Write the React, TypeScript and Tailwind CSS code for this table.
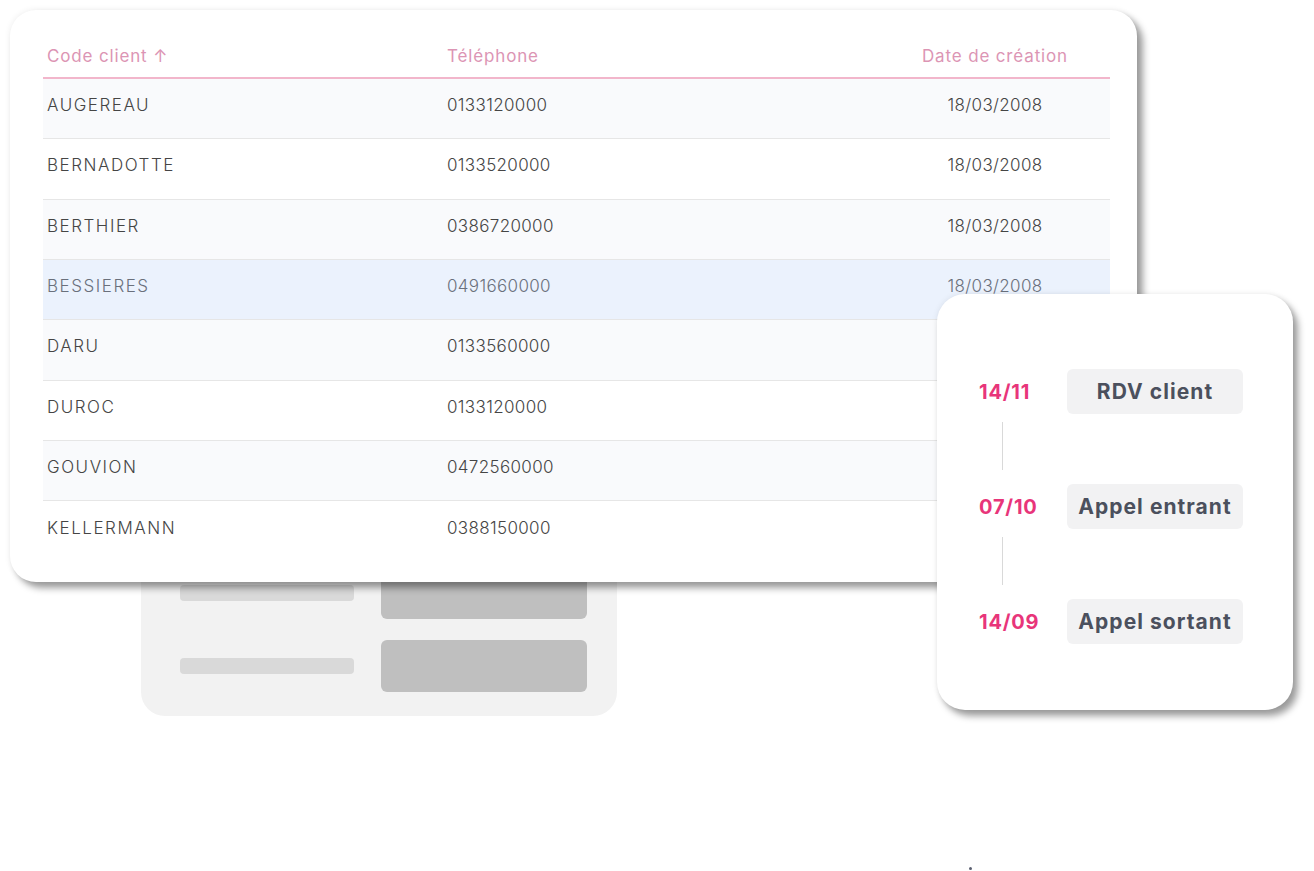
import React from "react";

const rows = [
  { code: "AUGEREAU", tel: "0133120000", date: "18/03/2008" },
  { code: "BERNADOTTE", tel: "0133520000", date: "18/03/2008" },
  { code: "BERTHIER", tel: "0386720000", date: "18/03/2008" },
  { code: "BESSIERES", tel: "0491660000", date: "18/03/2008" },
  { code: "DARU", tel: "0133560000", date: "18/03/2008" },
  { code: "DUROC", tel: "0133120000", date: "18/03/2008" },
  { code: "GOUVION", tel: "0472560000", date: "18/03/2008" },
  { code: "KELLERMANN", tel: "0388150000", date: "18/03/2008" },
];

const events = [
  { date: "14/11", label: "RDV client" },
  { date: "07/10", label: "Appel entrant" },
  { date: "14/09", label: "Appel sortant" },
];

export default function App() {
  return (
    <div
      className="relative w-[1314px] h-[871px] overflow-hidden bg-white"
      style={{ fontFamily: "Inter, 'Noto Sans', sans-serif" }}
    >
      {/* background grey card */}
      <div className="absolute left-[141px] top-[440px] w-[476px] h-[276px] rounded-[24px] bg-[#f2f2f2] flex flex-col justify-end gap-[21px] pb-[24px] pl-[39px]">
        {[0, 1].map((i) => (
          <div key={i} className="flex items-center gap-[27px]">
            <div className="w-[174px] h-[16px] rounded-[4px] bg-[#d9d9d9]" />
            <div className="w-[206px] h-[52px] rounded-[6px] bg-[#bfbfbf]" />
          </div>
        ))}
      </div>

      {/* main table card */}
      <div className="absolute left-[10px] top-[10px] w-[1127px] h-[572px] rounded-[26px] bg-white pl-[33px] pr-[27px] pt-[22px] shadow-[6px_6px_7px_rgba(0,0,0,0.38),0_0_6px_rgba(0,0,0,0.08)]">
        <div className="grid grid-cols-[400px_1fr_230px] h-[47px] pt-[4px] items-center border-b-2 border-[#f2b6cb] text-[17px] text-[#dc95b4] tracking-[0.05em]">
          <div className="pl-[4px]">Code client ↑</div>
          <div className="pl-[4px]">Téléphone</div>
          <div className="text-center">Date de création</div>
        </div>
        {rows.map((r, i) => {
          const hl = i === 3;
          const bg = hl ? "bg-[#ebf2fd]" : i % 2 === 0 ? "bg-[#f9fafc]" : "bg-white";
          return (
            <div
              key={r.code}
              className={`grid grid-cols-[400px_1fr_230px] h-[60.35px] pb-[6px] items-center text-[17px] font-light ${bg} ${
                i < rows.length - 1 ? "border-b border-[#e6e6e6]" : ""
              } ${hl ? "text-[#6a707c]" : "text-[#454545]"}`}
            >
              <div className="pl-[4px] tracking-[0.09em]">{r.code}</div>
              <div className="pl-[4px] tracking-[0.02em]">{r.tel}</div>
              <div className="text-center tracking-[0.02em]">{r.date}</div>
            </div>
          );
        })}
      </div>

      {/* timeline card */}
      <div className="absolute left-[937px] top-[294px] w-[356px] h-[416px] rounded-[28px] bg-white pt-[75px] pl-[42px] shadow-[5px_6px_7px_rgba(0,0,0,0.38),0_0_6px_rgba(0,0,0,0.08)]">
        {events.map((e, i) => (
          <div key={e.date}>
            <div className="flex items-center h-[45px]">
              <div className="w-[88px] text-[20px] font-bold tracking-[0.04em] text-[#e8357a]">{e.date}</div>
              <div className="w-[176px] h-[45px] rounded-[6px] bg-[#f2f2f3] flex items-center justify-center text-[21px] font-bold tracking-[0.05em] text-[#4b505d]">
                {e.label}
              </div>
            </div>
            {i < events.length - 1 && (
              <div className="h-[70px] pt-[8px] pl-[23px]">
                <div className="w-px h-[48px] bg-[#d9d9d9]" />
              </div>
            )}
          </div>
        ))}
      </div>

      {/* tiny dot */}
      <div className="absolute left-[969px] top-[867px] w-[3px] h-[3px] rounded-full bg-[#5a5f70]" />
    </div>
  );
}
